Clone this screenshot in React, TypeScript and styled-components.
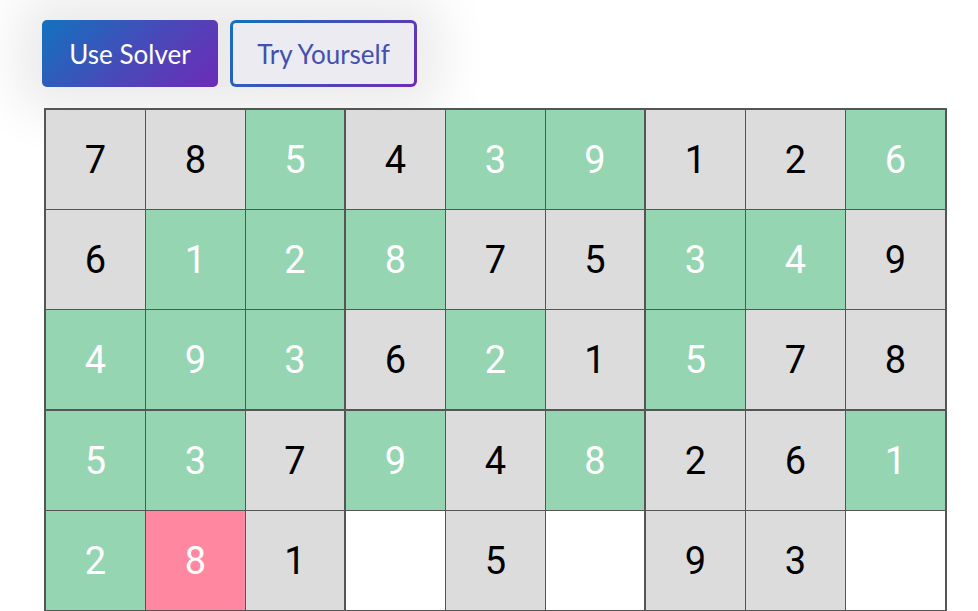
import styled, { createGlobalStyle } from "styled-components";

const GlobalStyle = createGlobalStyle`
  html, body {
    margin: 0;
    padding: 0;
    background: #ffffff;
  }
  body {
    font-family: Roboto, "Liberation Sans", sans-serif;
    overflow: hidden;
  }
`;

type Tone = "grey" | "green" | "pink" | "empty";

const tones: Record<Tone, { bg: string; fg: string }> = {
  grey: { bg: "#dcdcdc", fg: "#000000" },
  green: { bg: "#95d5b2", fg: "#ffffff" },
  pink: { bg: "#ff87a0", fg: "#ffffff" },
  empty: { bg: "#ffffff", fg: "#000000" },
};

const Page = styled.div`
  padding: 20px 0 0 42px;
  display: flex;
  flex-direction: column;
  align-items: flex-start;
  gap: 21px;
`;

const Toolbar = styled.div`
  display: flex;
  gap: 12px;
  background: #ebebeb;
  box-shadow: 0 0 50px 24px #ebebeb;
  border-radius: 6px;
`;

const SolverButton = styled.button`
  height: 67px;
  width: 176px;
  border: none;
  border-radius: 5px;
  background: linear-gradient(135deg, #1272bf 0%, #4a48b8 55%, #6d2bb7 100%);
  color: #ffffff;
  font-family: Lato, "Open Sans", sans-serif;
  font-size: 26px;
  cursor: pointer;
`;

const TryButton = styled.button`
  height: 67px;
  width: 187px;
  border: 3px solid transparent;
  border-radius: 6px;
  background:
    linear-gradient(#ebebf1, #ebebf1) padding-box,
    linear-gradient(135deg, #1272bf 0%, #4a48b8 55%, #6d2bb7 100%) border-box;
  color: #4450ad;
  font-family: Lato, "Open Sans", sans-serif;
  font-size: 26px;
  cursor: pointer;
`;

const Board = styled.div`
  margin-left: 2px;
  display: grid;
  grid-template-columns: repeat(9, auto);
  border: 2px solid #555555;
  background: #ffffff;
`;

const Cell = styled.div<{ $tone: Tone; $thickRight: boolean; $thickBottom: boolean }>`
  box-sizing: border-box;
  width: 100px;
  height: ${({ $thickBottom }) => ($thickBottom ? 101 : 100)}px;
  display: flex;
  align-items: center;
  justify-content: center;
  background: ${({ $tone }) => tones[$tone].bg};
  color: ${({ $tone }) => tones[$tone].fg};
  border-right: ${({ $thickRight }) => ($thickRight ? 2 : 1)}px solid #555555;
  border-bottom: ${({ $thickBottom }) => ($thickBottom ? 2 : 1)}px solid #555555;
  font-family: Roboto, "Liberation Sans", sans-serif;
  font-size: 38px;
  &:nth-child(9n) {
    border-right: none;
    width: 99px;
  }
`;

const values = [
  "785439126",
  "612875349",
  "493621578",
  "537948261",
  "281.5.93.",
  ".........",
  ".........",
  ".........",
  ".........",
];

const colors = [
  "GGNGNNGGN",
  "GNNNGGNNG",
  "NNNGNGNGG",
  "NNGNGNGGN",
  "NPGWGWGGW",
  "WWWWWWWWW",
  "WWWWWWWWW",
  "WWWWWWWWW",
  "WWWWWWWWW",
];

const toneOf = (c: string): Tone =>
  c === "G" ? "grey" : c === "N" ? "green" : c === "P" ? "pink" : "empty";

export default function App() {
  return (
    <>
      <GlobalStyle />
      <Page>
        <Toolbar>
          <SolverButton>Use Solver</SolverButton>
          <TryButton>Try Yourself</TryButton>
        </Toolbar>
        <Board>
          {values.map((row, r) =>
            row.split("").map((v, c) => (
              <Cell
                key={`${r}-${c}`}
                $tone={toneOf(colors[r][c])}
                $thickRight={c === 2 || c === 5}
                $thickBottom={r === 2 || r === 5}
              >
                {v === "." ? "" : v}
              </Cell>
            ))
          )}
        </Board>
      </Page>
    </>
  );
}
